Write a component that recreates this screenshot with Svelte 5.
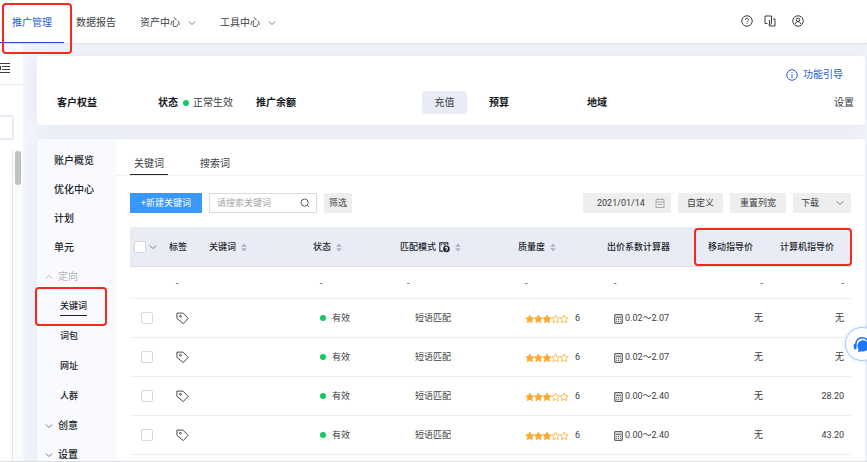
<script>
  let activeTab = $state('关键词');
  let search = $state('');
  let date = $state('2021/01/14');

  const nav = [
    { label: '推广管理', active: true },
    { label: '数据报告' },
    { label: '资产中心', menu: true },
    { label: '工具中心', menu: true }
  ];

  const side = [
    { label: '账户概览' },
    { label: '优化中心' },
    { label: '计划' },
    { label: '单元' },
    { label: '定向', group: true, open: true },
    { label: '关键词', sub: true, active: true },
    { label: '词包', sub: true },
    { label: '网址', sub: true },
    { label: '人群', sub: true },
    { label: '创意', group: true },
    { label: '设置', group: true }
  ];

  const tabs = ['关键词', '搜索词'];

  let allChecked = $state(false);
  let rows = $state([
    { checked: false, score: 6, range: '0.02～2.07', mobile: '无', pc: '无' },
    { checked: false, score: 6, range: '0.02～2.07', mobile: '无', pc: '无' },
    { checked: false, score: 6, range: '0.00～2.40', mobile: '无', pc: '28.20' },
    { checked: false, score: 6, range: '0.00～2.40', mobile: '无', pc: '43.20' }
  ]);

  function toggleAll() {
    for (const row of rows) row.checked = allChecked;
  }
</script>

{#snippet chevron(up)}
  <svg class="chevron" class:up viewBox="0 0 8 8" aria-hidden="true">
    <path d="M.8 2.400 4 5.600 7.200 2.400" />
  </svg>
{/snippet}

{#snippet sorter()}
  <svg class="sorter" viewBox="0 0 6 9" aria-hidden="true">
    <path d="M3 .5 5.8 3.7H.2zM3 8.5.2 5.3h5.6z" />
  </svg>
{/snippet}

<div class="shell">
  <header class="top">
    <nav class="nav">
      {#each nav as item}
        <a href="#nav" class="nav-item" class:active={item.active}>
          {item.label}
          {#if item.menu}{@render chevron(false)}{/if}
        </a>
      {/each}
    </nav>
    <div class="tools">
      <button type="button" class="icon-btn" aria-label="帮助">
        <svg viewBox="0 0 24 24" aria-hidden="true">
          <circle cx="12" cy="12" r="10.5" />
          <path d="M9 9.5a3 3 0 1 1 4.3 2.7c-.9.5-1.3 1-1.3 2.1M12 16.3v1.8" />
        </svg>
      </button>
      <button type="button" class="icon-btn" aria-label="切换">
        <svg viewBox="0 0 24 24" aria-hidden="true">
          <path d="M7 17H2V2h13v14.500a2 2 0 0 1-2 2h-2V10" />
          <path d="M18 8h4v14H10.500v-4" />
        </svg>
      </button>
      <button type="button" class="icon-btn user" aria-label="账户">
        <svg viewBox="0 0 24 24" aria-hidden="true">
          <circle cx="12" cy="12" r="10.5" />
          <circle cx="12" cy="9.5" r="3.5" />
          <path d="M6.500 18c.8-3 2.800-4.800 5.500-4.800s4.700 1.800 5.500 4.800" />
        </svg>
      </button>
    </div>
  </header>

  <div class="layout">
    <aside class="rail">
      <button type="button" class="fold" aria-label="收起">
        <svg viewBox="0 0 14 12" aria-hidden="true">
          <path d="M0 1.500h14M6 4.500h8M6 7.500h8M0 10.500h14" />
          <path class="solid" d="M1 6l4-2.500v5z" />
        </svg>
      </button>
      <div class="rail-search">
        <input type="text" aria-label="搜索计划" />
      </div>
      <div class="scroll"><div class="thumb"></div></div>
    </aside>

    <main class="main">
      <section class="card summary">
        <a class="guide" href="#guide">
          <svg viewBox="0 0 24 24" aria-hidden="true">
            <circle cx="12" cy="12" r="10.5" />
            <path d="M12 10.500V18M12 6v2" />
          </svg>
          功能引导
        </a>
        <div class="facts">
          <b>客户权益</b>
          <div class="state"><b>状态</b><span><i class="dot"></i>正常生效</span></div>
          <b>推广余额</b>
          <div><button type="button" class="recharge">充值</button></div>
          <b>预算</b>
          <div class="region"><b>地域</b><a href="#set">设置</a></div>
        </div>
      </section>

      <section class="card work">
        <nav class="side">
          {#each side as item}
            <a
              href="#side"
              class="side-item"
              class:group={item.group}
              class:open={item.open}
              class:sub={item.sub}
              class:active={item.active}
            >
              {#if item.group}{@render chevron(item.open)}{/if}
              <span>{item.label}</span>
            </a>
          {/each}
        </nav>

        <div class="content">
          <div class="tabs">
            {#each tabs as tab}
              <button type="button" class="tab" class:active={tab === activeTab} onclick={() => (activeTab = tab)}>
                {tab}
              </button>
            {/each}
          </div>

          <div class="toolbar">
            <button type="button" class="btn primary">+新建关键词</button>
            <label class="search">
              <input type="text" placeholder="请搜索关键词" aria-label="搜索关键词" bind:value={search} />
              <svg viewBox="0 0 12 12" aria-hidden="true">
                <circle cx="5.5" cy="5.5" r="4.3" /><path d="M8.800 8.800 11 11" />
              </svg>
            </label>
            <button type="button" class="btn filter">筛选</button>
            <label class="date">
              <input type="text" aria-label="日期" bind:value={date} />
              <svg viewBox="0 0 10 10" aria-hidden="true">
                <path d="M1 1.500h8v8H1zM1 4h8M3 0v2M7 0v2M3 6.500h4" />
              </svg>
            </label>
            <button type="button" class="btn">自定义</button>
            <button type="button" class="btn wide">重置列宽</button>
            <div class="download">
              <select aria-label="下载"><option>下载</option></select>
              {@render chevron(false)}
            </div>
          </div>

          <div class="table-wrap">
            <table>
              <colgroup>
                <col class="c-check" /><col class="c-tag" /><col /><col class="c-state" />
                <col class="c-match" /><col class="c-quality" /><col class="c-calc" />
                <col class="c-price" /><col class="c-price" />
              </colgroup>
              <thead>
                <tr>
                  <th>
                    <div class="check-head">
                      <input type="checkbox" aria-label="全选" bind:checked={allChecked} onchange={toggleAll} />
                      {@render chevron(false)}
                    </div>
                  </th>
                  <th>标签</th>
                  <th>关键词{@render sorter()}</th>
                  <th>状态{@render sorter()}</th>
                  <th>
                    匹配模式<svg class="match-help" viewBox="0 0 20 20" aria-hidden="true">
                      <path d="M16 5.500V1.500H1.500v15H7M4 5h2M8.500 5h4" />
                      <circle cx="13.5" cy="12.5" r="6" />
                      <path class="mark" d="M11.700 11.500a1.800 1.800 0 1 1 1.800 1.900M13.500 15v1.400" />
                    </svg>{@render sorter()}
                  </th>
                  <th>质量度{@render sorter()}</th>
                  <th>出价系数计算器</th>
                  <th class="price">移动指导价</th>
                  <th class="price">计算机指导价</th>
                </tr>
              </thead>
              <tbody>
                <tr class="total">
                  <td></td><td>-</td><td></td><td>-</td><td>-</td><td>-</td><td>-</td>
                  <td class="price">-</td><td class="price">-</td>
                </tr>
                {#each rows as row, i}
                  <tr>
                    <td class="check"><input type="checkbox" aria-label={`选择第${i + 1}行`} bind:checked={row.checked} /></td>
                    <td>
                      <svg class="tag" viewBox="0 0 14 14" aria-hidden="true">
                        <path d="M1 1.200h6.500l5.600 5.600-5.300 5.700L1 6.800z" />
                        <circle cx="4.8" cy="4.6" r="1" />
                      </svg>
                    </td>
                    <td></td>
                    <td><i class="dot"></i>有效</td>
                    <td class="match">短语匹配</td>
                    <td>
                      <svg class="stars" viewBox="0 0 110 24" aria-hidden="true">
                        {#each [0, 1, 2, 3, 4] as n}
                          <path
                            class:full={n < 3}
                            transform={`translate(${n * 21.5} 0)`}
                            d="M12 2l3.100 6.400 6.900 1-5 4.800 1.200 7-6.200-3.300-6.200 3.300 1.200-7-5-4.800 6.900-1z"
                          />
                        {/each}
                      </svg>{row.score}
                    </td>
                    <td>
                      <svg class="calc" viewBox="0 0 9 10" aria-hidden="true">
                        <path d="M.8.700h7.400v8.600H.8zM2 3.200h5M2.200 5.300h1M4 5.300h1M5.800 5.300h1M2.200 7.300h1M4 7.300h1M5.800 7.300h1" />
                      </svg>{row.range}
                    </td>
                    <td class="price">{row.mobile}</td>
                    <td class="price">{row.pc}</td>
                  </tr>
                {/each}
              </tbody>
            </table>
          </div>
        </div>
      </section>
    </main>
  </div>

  <button type="button" class="service" aria-label="在线客服">
    <svg viewBox="0 0 24 24" aria-hidden="true">
      <path class="band" d="M4 13C4 6 8 2.500 13 2.500S22 6 22 13" />
      <path d="M14 6a8 8 0 1 1-2.500 15.500L7 23l1-4A8 8 0 0 1 14 6z" />
      <rect x="1" y="11" width="4" height="8" rx="2" />
    </svg>
  </button>
</div>

<style>
  :global(body) {
    margin: 0;
    background: #eff3f8;
  }
  .shell {
    position: relative;
    box-sizing: border-box;
    height: 100vh;
    display: flex;
    flex-direction: column;
    overflow: hidden;
    border-bottom: 1px solid #dcdde0;
    color: #3b3d42;
    font-family: Roboto, "Noto Sans CJK SC", sans-serif;
    font-size: 10px;
    line-height: 16px;
  }
  button, input, select {
    box-sizing: border-box;
    margin: 0;
    padding: 0;
    border: 0;
    background: none;
    color: inherit;
    font: inherit;
  }
  a {
    color: inherit;
    text-decoration: none;
  }
  svg {
    fill: none;
    stroke: currentColor;
    flex: none;
  }
  .chevron {
    width: 8px;
    height: 8px;
    color: #777b86;
  }
  .chevron.up { transform: rotate(180deg); }
  .dot {
    display: inline-block;
    width: 6px;
    height: 6px;
    border-radius: 50%;
    background: #16c862;
  }

  /* top bar */
  .top {
    position: relative;
    z-index: 2;
    flex: none;
    height: 43px;
    display: flex;
    justify-content: space-between;
    background: #fff;
    border-bottom: 1px solid #dde1e7;
    box-shadow: 0 2px 8px rgba(40, 60, 90, 0.04);
  }
  .nav { display: flex; }
  .nav-item {
    position: relative;
    display: flex;
    align-items: center;
    gap: 8px;
    padding: 3px 12px 0;
  }
  .nav-item.active {
    color: #2660d8;
    box-shadow: inset 0 -1px #1c52be;
  }
  .nav-item.active::after {
    content: '';
    position: absolute;
    inset: 3px -8px -11px 2px;
    border: 2px solid #f5291d;
    border-radius: 4px;
  }
  .tools {
    display: flex;
    align-items: center;
    gap: 10px;
    padding-right: 62px;
  }
  .icon-btn {
    width: 13px;
    height: 13px;
    display: flex;
  }
  .icon-btn svg { width: 12px; height: 12px; stroke-width: 2; }
  .icon-btn.user { margin-left: 5px; }

  /* left rail */
  .layout {
    flex: 1;
    min-height: 0;
    display: flex;
  }
  .rail {
    flex: none;
    width: 23px;
    display: flex;
    flex-direction: column;
    overflow: hidden;
    background: #fff;
  }
  .fold {
    flex: none;
    height: 41px;
    display: flex;
    align-items: center;
    padding-top: 8px;
    border-bottom: 1px solid #e9edf3;
  }
  .fold svg {
    width: 14px;
    height: 12px;
    margin-left: -4px;
  }
  .fold .solid { fill: currentColor; stroke: none; }
  .rail-search { padding: 30px 9px 9px 0; }
  .rail-search input {
    display: block;
    width: 20px;
    height: 25px;
    margin-left: -6px;
    border: 2px solid #e8ebf5;
    border-radius: 3px;
  }
  .scroll {
    flex: 1;
    box-sizing: border-box;
    width: 11px;
    margin-left: 12px;
    padding: 2px;
    background: #fafafa;
    border-left: 1px solid #e6e6e6;
  }
  .thumb {
    width: 6px;
    height: 34px;
    border-radius: 3px;
    background: #c1c1c1;
  }

  /* cards */
  .main {
    flex: 1;
    min-width: 0;
    display: flex;
    flex-direction: column;
    gap: 14px;
    padding: 12px 2px 0 14px;
    overflow: hidden;
    background: #f1f5fa;
  }
  .card {
    background: #fff;
    box-shadow: 0 0 14px rgba(60, 80, 110, 0.08);
  }
  .summary {
    flex: none;
    box-sizing: border-box;
    padding: 11px 11px 11px 20px;
    border-radius: 4px;
  }
  .guide {
    display: flex;
    justify-content: flex-end;
    align-items: center;
    gap: 5px;
    padding-right: 11px;
    color: #2660d8;
  }
  .guide svg { width: 12px; height: 12px; stroke-width: 2; }
  .facts {
    display: grid;
    grid-template-columns: 101fr 98fr 166fr 67fr 98fr 267fr;
    align-items: center;
    margin-top: 8px;
  }
  .facts b { color: #15171a; }
  .state { display: flex; gap: 5px; white-space: nowrap; }
  .state .dot { margin-right: 4px; }
  .recharge {
    display: block;
    width: 45px;
    height: 23px;
    border-radius: 3px;
    background: #e9ecf6;
  }
  .region { display: flex; justify-content: space-between; }

  .work {
    flex: 1;
    min-height: 0;
    display: flex;
  }
  .side {
    flex: none;
    width: 79px;
    box-sizing: border-box;
    padding-top: 7px;
    background: #f9faff;
  }
  .side-item {
    position: relative;
    display: flex;
    align-items: center;
    height: 29px;
    padding-left: 17px;
    color: #202226;
    font-weight: 500;
  }
  .side-item.group { padding-left: 8px; gap: 5px; }
  .side-item.open, .side-item.open .chevron {
    color: #b0b1b5;
    font-weight: 400;
  }
  .side-item.sub {
    height: 30px;
    padding-left: 23px;
    font-size: 9px;
  }
  .side-item.active span { box-shadow: 0 1px #202226; line-height: 18px; }
  .side-item.active::after {
    content: '';
    position: absolute;
    inset: -4px 9px -5px -2px;
    border: 2px solid #f5291d;
    border-radius: 4px;
  }

  .content { flex: 1; min-width: 0; }
  .tabs {
    display: flex;
    gap: 28px;
    height: 36px;
    padding-left: 14px;
    border-bottom: 1px solid #eef0f3;
  }
  .tab {
    padding: 14px 4px 0;
  }
  .tab.active { box-shadow: inset 0 -1px #222; }

  .toolbar {
    display: flex;
    gap: 7px;
    padding: 17px 14px 14px;
    font-size: 9px;
  }
  .btn {
    height: 20px;
    padding: 0 9px;
    background: #eee;
    white-space: nowrap;
  }
  .btn.primary {
    padding: 0 11px;
    background: #3898fc;
    color: #fff;
  }
  .btn.filter { padding: 0 5px; }
  .btn.wide { padding: 0 10px; }
  .search, .date, .download {
    box-sizing: border-box;
    height: 20px;
    display: flex;
    align-items: center;
  }
  .search {
    width: 108px;
    padding: 0 6px 0 7px;
    border: 1px solid #dcdcdc;
  }
  .search input, .date input {
    flex: 1;
    min-width: 0;
    outline: none;
  }
  .search input::placeholder { color: #a5a5a5; opacity: 1; }
  .search svg { width: 10px; height: 10px; }
  .date {
    width: 88px;
    margin-left: auto;
    padding: 0 6px 0 14px;
    background: #eee;
  }
  .date svg { width: 10px; height: 10px; color: #aaa; }
  .download {
    position: relative;
    width: 58px;
    background: #eee;
  }
  .download select {
    appearance: none;
    width: 100%;
    height: 100%;
    padding-left: 8px;
    outline: none;
  }
  .download .chevron {
    position: absolute;
    right: 7px;
    pointer-events: none;
  }

  /* keyword table */
  .table-wrap {
    position: relative;
    padding: 0 14px;
  }
  /* frame over the two guide price headings */
  .table-wrap::after {
    content: '';
    position: absolute;
    top: 1px;
    right: 13px;
    box-sizing: border-box;
    width: 158px;
    height: 38px;
    border: 2px solid #f5291d;
    border-radius: 4px;
  }
  table {
    width: 100%;
    table-layout: fixed;
    border-collapse: separate;
    border-spacing: 0;
    font-size: 9px;
  }
  .c-check { width: 39px; }
  .c-tag { width: 40px; }
  .c-state { width: 87px; }
  .c-match { width: 118px; }
  .c-quality { width: 89px; }
  .c-calc { width: 82px; }
  .c-price { width: 81px; }
  th, td {
    box-sizing: border-box;
    height: 39px;
    padding: 0;
    text-align: left;
    white-space: nowrap;
  }
  th {
    height: 40px;
    background: #e9ecf5;
    border-bottom: 1px solid #dadeea;
    color: #23262c;
    font-weight: 500;
  }
  td {
    padding-left: 7px;
    border-bottom: 1px solid #eceef3;
  }
  .total td { height: 32px; }
  td.check { padding-left: 11px; }
  td.match { padding-left: 15px; }
  th.price { padding-right: 17px; text-align: right; }
  td.price { padding-right: 7px; text-align: right; }
  .check-head {
    display: flex;
    align-items: center;
    gap: 3px;
    padding-left: 4px;
  }
  input[type='checkbox'] {
    appearance: none;
    display: block;
    width: 12px;
    height: 12px;
    border: 1px solid #d6d9e8;
    border-radius: 2px;
    background: #fff;
  }
  input[type='checkbox']:checked { background: #3898fc; }
  th svg, td svg { vertical-align: middle; }
  .sorter {
    width: 6px;
    height: 9px;
    margin-left: 5px;
    fill: #aab1c5;
    stroke: none;
  }
  .match-help {
    width: 11px;
    height: 11px;
    margin-left: 3px;
    stroke-width: 2;
  }
  .match-help circle { fill: #23262c; stroke: none; }
  .match-help .mark { stroke: #fff; }
  .tag { width: 13px; height: 13px; }
  td .dot { margin-right: 6px; }
  .stars {
    width: 44px;
    height: 10px;
    margin-right: 6px;
    stroke: #fda92f;
    stroke-width: 2;
  }
  .stars .full { fill: #fda92f; }
  .calc { width: 9px; height: 10px; margin-right: 2px; }

  .service {
    position: absolute;
    top: 327px;
    right: -12px;
    width: 34px;
    height: 34px;
    display: flex;
    align-items: center;
    padding-left: 7px;
    border: 1px solid #a9cbf8;
    border-radius: 50%;
    background: #fff;
    color: #1b76f8;
    box-shadow: 0 0 4px rgba(27, 118, 248, 0.2);
  }
  .service svg { width: 17px; height: 17px; fill: currentColor; stroke: none; }
  .service .band { fill: none; stroke: currentColor; stroke-width: 2; }
</style>
